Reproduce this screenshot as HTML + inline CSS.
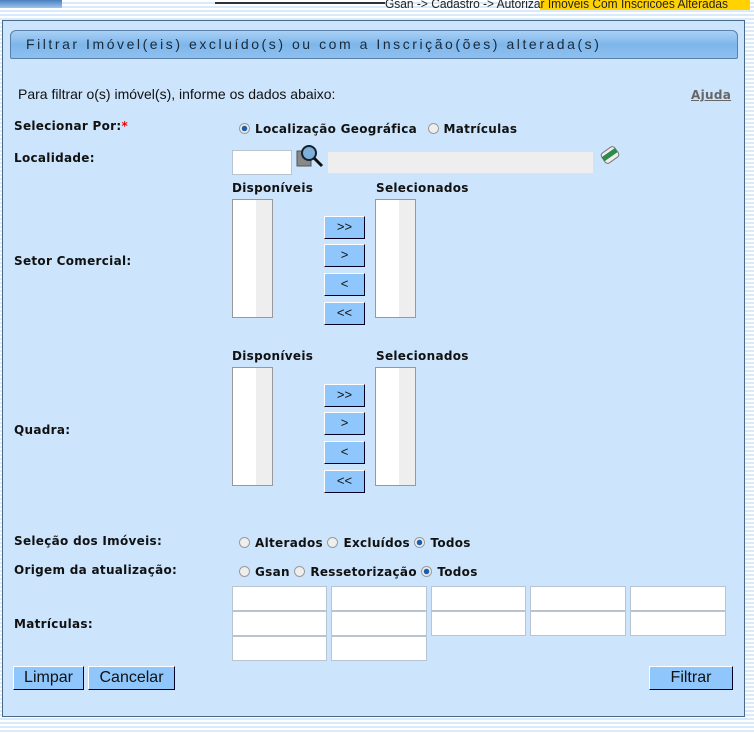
<!DOCTYPE html>
<html><head><meta charset="utf-8"><style>
*{margin:0;padding:0;box-sizing:border-box}
body{width:754px;height:733px;overflow:hidden;position:relative;background:repeating-linear-gradient(#fff 0 2px,#dbeafb 2px 4px);font-family:"Liberation Sans",sans-serif}
.a{position:absolute;white-space:nowrap}
#panel{left:2px;top:20px;width:743px;height:697px;background:#cce5fc;border:1px solid #4a6a8a}
#title{left:10px;top:30px;width:728px;height:29px;border:1px solid #5a7fa8;border-radius:6px 6px 2px 2px;background:linear-gradient(#a9d0f5,#7fb6ea 50%,#8dc0f0);font-size:14px;letter-spacing:2.55px;color:#1a2a3a;padding:5px 0 0 15px}
.lb{font-family:"DejaVu Sans",sans-serif;font-weight:bold;font-size:12px;letter-spacing:0.3px;color:#111}
.rd{display:inline-block;width:11px;height:11px;border-radius:50%;border:1px solid #9a9a9a;background:#eee;vertical-align:-1px;margin-right:5px}
.rd.on{background:radial-gradient(circle,#1a5fae 0 2.5px,#eee 3px)}
.inp{background:#fff;border:1px solid #b8c4d0}
.lst{background:#fff;border:1px solid #999;width:41px;height:119px}
.lst:after{content:"";position:absolute;right:0;top:0;width:16px;height:100%;background:#eee}
.ar{width:41px;height:23px;background:#8fc6fb;border:1px solid #fff;border-right-color:#002;border-bottom-color:#002;font-size:13px;text-align:center;line-height:20px;color:#111}
.btn{height:24px;background:#8fc6fb;border:1px solid #fff;border-right-color:#002;border-bottom-color:#002;font-size:16px;text-align:center;line-height:22px;color:#111}
</style></head><body>
<div class="a" style="left:0;top:0;width:62px;height:8px;background:linear-gradient(#4a7fc0,#9cc4ec)"></div>
<div class="a" style="left:215px;top:0;width:170px;height:4px;border-bottom:2px solid #333"></div>
<div class="a" style="left:540px;top:0;width:210px;height:10px;background:#ffd200"></div>
<div class="a" style="left:385px;top:-4px;font-size:13px;color:#222;transform:scaleX(.92);transform-origin:left">Gsan -&gt; Cadastro -&gt; Autorizar Imoveis Com Inscricoes Alteradas</div>
<div id="panel" class="a"></div>
<div id="title" class="a">Filtrar Imóvel(eis) excluído(s) ou com a Inscrição(ões) alterada(s)</div>
<div class="a" style="left:18px;top:86px;font-size:14px;color:#111">Para filtrar o(s) imóvel(s), informe os dados abaixo:</div>
<div class="a lb" style="left:691px;top:88px;color:#666;text-decoration:underline">Ajuda</div>
<div class="a lb" style="left:14px;top:119px">Selecionar Por:<span style="color:#e00">*</span></div>
<div class="a lb" style="left:239px;top:122px"><span class="rd on"></span>Localização Geográfica <span class="rd" style="margin-left:6px"></span>Matrículas</div>
<div class="a lb" style="left:14px;top:151px">Localidade:</div>
<div class="a inp" style="left:232px;top:150px;width:60px;height:25px"></div>
<svg class="a" style="left:295px;top:143px" width="30" height="26"><rect x="2" y="8" width="14" height="15" fill="#888" stroke="#555"/><circle cx="14" cy="10" r="7" fill="#7fb0d8" stroke="#123" stroke-width="2"/><line x1="19" y1="15" x2="27" y2="23" stroke="#111" stroke-width="3"/></svg>
<div class="a" style="left:328px;top:152px;width:265px;height:21px;background:#eee"></div>
<svg class="a" style="left:598px;top:143px" width="24" height="24"><g transform="rotate(-35 12 12)"><rect x="4" y="6" width="16" height="12" rx="3" fill="#eee" stroke="#777"/><rect x="4" y="9" width="16" height="5" fill="#2e8a4a"/></g></svg>
<div class="a lb" style="left:232px;top:181px">Disponíveis</div>
<div class="a lb" style="left:376px;top:181px">Selecionados</div>
<div class="a lst" style="left:232px;top:199px"></div>
<div class="a lst" style="left:375px;top:199px"></div>
<div class="a ar" style="left:324px;top:216px">&gt;&gt;</div>
<div class="a ar" style="left:324px;top:244px">&gt;</div>
<div class="a ar" style="left:324px;top:273px">&lt;</div>
<div class="a ar" style="left:324px;top:302px">&lt;&lt;</div>
<div class="a lb" style="left:14px;top:254px">Setor Comercial:</div>
<div class="a lb" style="left:232px;top:349px">Disponíveis</div>
<div class="a lb" style="left:376px;top:349px">Selecionados</div>
<div class="a lst" style="left:232px;top:367px"></div>
<div class="a lst" style="left:375px;top:367px"></div>
<div class="a ar" style="left:324px;top:384px">&gt;&gt;</div>
<div class="a ar" style="left:324px;top:412px">&gt;</div>
<div class="a ar" style="left:324px;top:441px">&lt;</div>
<div class="a ar" style="left:324px;top:470px">&lt;&lt;</div>
<div class="a lb" style="left:14px;top:423px">Quadra:</div>
<div class="a lb" style="left:14px;top:534px">Seleção dos Imóveis:</div>
<div class="a lb" style="left:239px;top:536px"><span class="rd"></span>Alterados <span class="rd"></span>Excluídos <span class="rd on"></span>Todos</div>
<div class="a lb" style="left:14px;top:563px">Origem da atualização:</div>
<div class="a lb" style="left:239px;top:565px"><span class="rd"></span>Gsan <span class="rd"></span>Ressetorização <span class="rd on"></span>Todos</div>
<div class="a lb" style="left:14px;top:617px">Matrículas:</div>
<div class="a inp" style="left:232px;top:586px;width:95px;height:25px"></div>
<div class="a inp" style="left:331px;top:586px;width:96px;height:25px"></div>
<div class="a inp" style="left:431px;top:586px;width:95px;height:25px"></div>
<div class="a inp" style="left:530px;top:586px;width:96px;height:25px"></div>
<div class="a inp" style="left:630px;top:586px;width:96px;height:25px"></div>
<div class="a inp" style="left:232px;top:611px;width:95px;height:25px"></div>
<div class="a inp" style="left:331px;top:611px;width:96px;height:25px"></div>
<div class="a inp" style="left:431px;top:611px;width:95px;height:25px"></div>
<div class="a inp" style="left:530px;top:611px;width:96px;height:25px"></div>
<div class="a inp" style="left:630px;top:611px;width:96px;height:25px"></div>
<div class="a inp" style="left:232px;top:636px;width:95px;height:25px"></div>
<div class="a inp" style="left:331px;top:636px;width:96px;height:25px"></div>
<div class="a btn" style="left:13px;top:666px;width:71px">Limpar</div>
<div class="a btn" style="left:88px;top:666px;width:87px">Cancelar</div>
<div class="a btn" style="left:649px;top:666px;width:84px">Filtrar</div>
</body></html>
